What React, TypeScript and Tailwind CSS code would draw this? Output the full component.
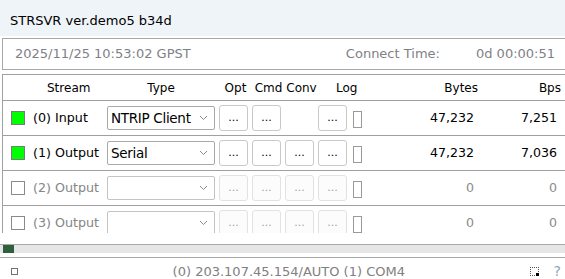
import React from 'react'

type Row = {
  name: string
  type: string
  active: boolean
  conv: boolean
  bytes: string
  bps: string
}

const rows: Row[] = [
  { name: '(0) Input', type: 'NTRIP Client', active: true, conv: false, bytes: '47,232', bps: '7,251' },
  { name: '(1) Output', type: 'Serial', active: true, conv: true, bytes: '47,232', bps: '7,036' },
  { name: '(2) Output', type: '', active: false, conv: true, bytes: '0', bps: '0' },
  { name: '(3) Output', type: '', active: false, conv: true, bytes: '0', bps: '0' },
]

const Chevron = () => (
  <svg width="9" height="6" viewBox="0 0 9 6" className="shrink-0">
    <path d="M1 1l3.5 3.5L8 1" fill="none" stroke="#8a8a8a" strokeWidth="1" />
  </svg>
)

const DotButton = ({ on }: { on: boolean }) => (
  <button
    className={`w-[29px] h-[26px] shrink-0 rounded-[3px] border flex items-center justify-center text-[11px] leading-none pb-[2px] ${
      on ? 'border-[#c9c9c9] bg-white text-black' : 'border-[#e2e2e2] bg-[#fcfcfc] text-[#a0a0a0]'
    }`}
  >
    ...
  </button>
)

const StreamRow = ({ row }: { row: Row }) => (
  <div className="h-[35px] shrink-0 flex items-center border-b border-[#a0a0a0]">
    <div
      className={`ml-[8px] w-[14px] h-[14px] shrink-0 border ${
        row.active ? 'border-[#7a7a7a] bg-[#00ff00]' : 'border-[#8a8a8a] bg-white'
      }`}
    />
    <div
      className={`ml-[8px] w-[74px] shrink-0 text-[12.7px] whitespace-nowrap ${
        row.active ? 'text-black' : 'text-[#858585]'
      }`}
    >
      {row.name}
    </div>
    <div
      className={`w-[108px] h-[24px] shrink-0 rounded-[2px] border flex items-center justify-between pl-[3px] pr-[6px] bg-white ${
        row.active ? 'border-[#a9a9a9]' : 'border-[#c4c4c4]'
      }`}
    >
      <span className="text-[13.5px] tracking-[-0.3px] text-black whitespace-nowrap">{row.type}</span>
      <Chevron />
    </div>
    <div className="ml-[4px] flex gap-[4px]">
      <DotButton on={row.active} />
      <DotButton on={row.active} />
      {row.conv ? <DotButton on={row.active} /> : <div className="w-[29px] shrink-0" />}
      <DotButton on={row.active} />
    </div>
    <div className="ml-[6px] w-[9px] h-[17px] shrink-0 border border-[#9a9a9a] bg-white mt-[3px]" />
    <div
      className={`w-[112px] shrink-0 text-right text-[12.6px] ${
        row.active ? 'text-black' : 'text-[#8c8a86]'
      }`}
    >
      {row.bytes}
    </div>
    <div
      className={`w-[83px] shrink-0 text-right text-[12.6px] ${
        row.active ? 'text-black' : 'text-[#8c8a86]'
      }`}
    >
      {row.bps}
    </div>
  </div>
)

export default function App() {
  return (
    <div
      className="w-[565px] h-[279px] overflow-hidden bg-white flex flex-col text-black"
      style={{ fontFamily: '"DejaVu Sans", Verdana, sans-serif' }}
    >
      <div className="h-[36px] shrink-0 bg-[#eff4f9] flex items-center pl-[10px] text-[13px] pt-[6px]">
        STRSVR ver.demo5 b34d
      </div>

      <div className="ml-[2px] mt-[2px] h-[32px] shrink-0 border-l border-y border-[#a8a8a8] flex items-center text-[13px] text-[#7f7f88]">
        <span className="ml-[12px]">2025/11/25 10:53:02 GPST</span>
        <span className="ml-auto">Connect Time:</span>
        <span className="ml-[36px] mr-[10px]">0d 00:00:51</span>
      </div>

      <div className="ml-[2px] mt-[4px] h-[159px] shrink-0 border-l border-t border-[#a0a0a0] overflow-hidden flex flex-col">
        <div className="h-[26px] shrink-0 flex items-center border-b border-[#a0a0a0] text-[12px]">
          <div className="w-[104px] shrink-0 pl-[44px]">Stream</div>
          <div className="w-[108px] shrink-0 text-center">Type</div>
          <div className="w-[37px] shrink-0 text-center pl-[4px]">Opt</div>
          <div className="w-[33px] shrink-0 text-center">Cmd</div>
          <div className="w-[33px] shrink-0 text-center">Conv</div>
          <div className="w-[48px] shrink-0 pl-[18px]">Log</div>
          <div className="w-[112px] shrink-0 text-right">Bytes</div>
          <div className="w-[83px] shrink-0 text-right">Bps</div>
        </div>
        {rows.map((row, idx) => (
          <StreamRow key={idx} row={row} />
        ))}
      </div>

      <div className="mt-[11px] h-[9px] shrink-0 border-t border-[#a8a8a8] bg-[#e6e6e6] flex">
        <div className="ml-[3px] w-[11px] h-full bg-[#2f5f3c]" />
      </div>

      <div className="mt-[4px] flex-1 border-t border-[#a8a8a8] flex items-center text-[13px] text-[#808080] pt-[3px]">
        <div className="ml-[11px] w-[7px] h-[7px] border border-[#707080] shrink-0" />
        <div className="flex-1 text-center pl-[30px]">(0) 203.107.45.154/AUTO (1) COM4</div>
        <div className="relative w-[9px] h-[9px] border border-dotted border-[#555] shrink-0">
          <div className="absolute right-[-1px] bottom-[-1px] w-[3px] h-[3px] bg-black" />
        </div>
        <div className="ml-[15px] mr-[4px] text-[#8ea4be] text-[14px]">?</div>
      </div>
    </div>
  )
}
